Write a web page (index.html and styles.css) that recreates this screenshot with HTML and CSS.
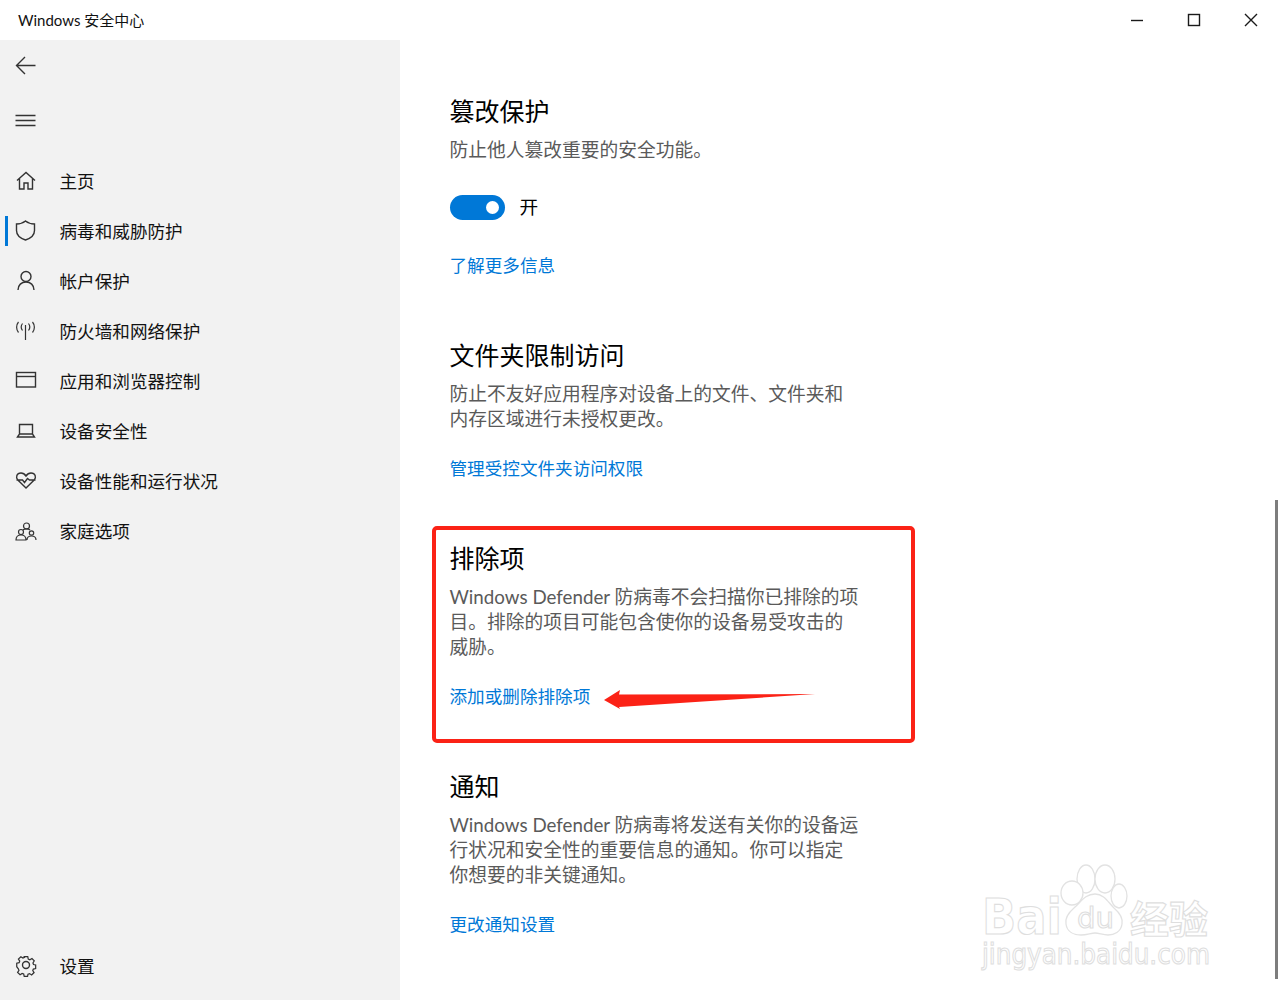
FILE: index.html
```html
<!DOCTYPE html>
<html lang="zh-CN">
<head>
<meta charset="utf-8">
<title>Windows 安全中心</title>
<link rel="stylesheet" href="styles.css">
</head>
<body>
<div class="window">
  <header class="titlebar">
    <span class="title">Windows 安全中心</span>
    <div class="controls">
      <button class="ctl"><svg width="14" height="14" viewBox="0 0 14 14"><path d="M1 7.500h12" class="ln"/></svg></button>
      <button class="ctl"><svg width="14" height="14" viewBox="0 0 14 14"><rect x="1.500" y="1.500" width="11" height="11" class="ln"/></svg></button>
      <button class="ctl"><svg width="14" height="14" viewBox="0 0 14 14"><path d="M1 1l12 12M13 1L1 13" class="ln"/></svg></button>
    </div>
  </header>
  <div class="body">
    <aside class="sidebar">
      <div class="tool back"><svg class="ico" viewBox="0 0 22 22"><path d="M20.500 10.500H1.500M10 2l-8.500 8.500L10 19"/></svg></div>
      <div class="tool menu"><svg class="ico" viewBox="0 0 22 22"><path d="M.5 5.500h20M.5 10.500h20M.5 15.500h20"/></svg></div>
      <nav class="nav">
        <a class="item"><svg class="ico" viewBox="0 0 22 22"><path d="M2 10.500 11 2.500l9 8M4.500 8.500V19h4.500v-6h4v6h4.500V8.500"/></svg><span>主页</span></a>
        <a class="item active"><svg class="ico" viewBox="0 0 22 22"><path d="M10.500 1c2.500 2 5.500 3 9 3v6.500c0 4.500-3 7.500-9 9.500-6-2-9-5-9-9.500V4c3.500 0 6.500-1 9-3z"/></svg><span>病毒和威胁防护</span></a>
        <a class="item"><svg class="ico" viewBox="0 0 22 22"><circle cx="11" cy="6.500" r="5"/><path d="M3 20c0-5 3.500-8 8-8s8 3 8 8"/></svg><span>帐户保护</span></a>
        <a class="item"><svg class="ico ico-thin" viewBox="0 0 22 22"><path d="M10.500 5v15M7.500 3.500c-1.500 2-1.500 5 0 7M13.500 3.500c1.500 2 1.500 5 0 7M3.500 2c-2.500 3-2.500 7.500 0 10.500M17.500 2c2.500 3 2.500 7.500 0 10.500"/></svg><span>防火墙和网络保护</span></a>
        <a class="item"><svg class="ico" viewBox="0 0 22 22"><rect x="1.500" y="2.500" width="19" height="14.500"/><path d="M1.500 6.500h19"/></svg><span>应用和浏览器控制</span></a>
        <a class="item"><svg class="ico" viewBox="0 0 22 22"><path d="M4.500 14V4.500h13V14M2.500 17l2-3h13l2 3z"/></svg><span>设备安全性</span></a>
        <a class="item"><svg class="ico" viewBox="0 0 22 22"><path d="M11 18 2.800 10C.5 7.500 1.500 3 6 3c2.500 0 4 1.500 5 3 1-1.500 2.500-3 5-3 4.500 0 5.500 4.500 3.200 7zM1.500 10h6l2 2.500 3-4 2 1.500h6"/></svg><span>设备性能和运行状况</span></a>
        <a class="item"><svg class="ico ico-thin" viewBox="0 0 22 22"><circle cx="11.500" cy="6" r="3"/><circle cx="6" cy="12" r="2.500"/><circle cx="16.500" cy="13" r="2.200"/><path d="M1 20c0-3 2-5 5-5s5 2 5 5zM12 20c0-2.500 2-4 4.500-4s4.500 1.500 4.500 4M8 10c1-1 2.300-1.200 3.500-1.200s2.500.2 3.500 1.200"/></svg><span>家庭选项</span></a>
      </nav>
      <a class="item settings"><svg class="ico" viewBox="0 0 22 22"><circle cx="11" cy="10" r="3.500"/><path d="M9 1.500h4l.6 2.800 1.800.8 2.400-1.500 2.600 2.800-1.500 2.300.7 1.800 2.400.5v4l-2.600.6-.7 1.700 1.500 2.300-2.800 2.700-2.300-1.500-1.800.7-.5 2.400H9l-.6-2.600-1.800-.7-2.300 1.500-2.800-2.700 1.500-2.300-.7-1.800L.5 13V9l2.700-.6.7-1.800-1.500-2.300L5.200 1.600l2.300 1.500 1.800-.8z" transform="translate(1.300 .3) scale(.88)"/></svg><span>设置</span></a>
    </aside>
    <main class="main">
      <section class="sec sec-tamper">
        <h2>篡改保护</h2>
        <p>防止他人篡改重要的安全功能。</p>
        <div class="toggle-row"><span class="toggle"><span class="knob"></span></span><span class="toggle-label">开</span></div>
        <a class="link">了解更多信息</a>
      </section>
      <section class="sec">
        <h2>文件夹限制访问</h2>
        <p>防止不友好应用程序对设备上的文件、文件夹和内存区域进行未授权更改。</p>
        <a class="link">管理受控文件夹访问权限</a>
      </section>
      <section class="sec sec-marked">
        <h2>排除项</h2>
        <p>Windows Defender 防病毒不会扫描你已排除的项目。排除的项目可能包含使你的设备易受攻击的威胁。</p>
        <a class="link">添加或删除排除项</a>
        <div class="redbox"></div>
        <svg class="arrow" width="214" height="22" viewBox="0 0 214 22"><polygon points="0,11 16,1 15,5.500 211,5 15,18 16,20"/></svg>
      </section>
      <section class="sec">
        <h2>通知</h2>
        <p>Windows Defender 防病毒将发送有关你的设备运行状况和安全性的重要信息的通知。你可以指定你想要的非关键通知。</p>
        <a class="link">更改通知设置</a>
      </section>
      <svg class="watermark" width="232" height="120" viewBox="0 0 232 120">
        <g class="wm-shape">
          <ellipse cx="106" cy="17" rx="9" ry="14"/>
          <ellipse cx="125" cy="17" rx="10" ry="14"/>
          <ellipse cx="92" cy="31" rx="11" ry="12"/>
          <ellipse cx="139" cy="34" rx="8" ry="12"/>
          <path d="M115 32c9 0 13 8 19 14 7 6 9 11 8 16-1 8-8 11-14 11-5 0-9-2-13-2s-8 2-14 2c-7 0-14-3-15-11-1-5 1-10 8-16 7-6 11-14 21-14z"/>
        </g>
        <text class="wm wm-big" x="2" y="72" textLength="80" lengthAdjust="spacingAndGlyphs">Bai</text>
        <text class="wm wm-du" x="97" y="66" textLength="37" lengthAdjust="spacingAndGlyphs">du</text>
        <text class="wm wm-cn" x="150" y="71" textLength="78" lengthAdjust="spacingAndGlyphs">经验</text>
        <text class="wm wm-url" x="2" y="102" textLength="228" lengthAdjust="spacingAndGlyphs">jingyan.baidu.com</text>
      </svg>
      <div class="scrollbar"></div>
    </main>
  </div>
</div>
</body>
</html>
```

FILE: styles.css
```css
* { box-sizing: border-box; }
html, body { margin: 0; padding: 0; height: 100%; overflow: hidden; }
body {
  font-family: Lato, "Noto Sans CJK SC", sans-serif;
  color: #000;
  background: #fff;
}
.window { display: flex; flex-direction: column; height: 1000px; width: 1280px; }
.titlebar { height: 40px; display: flex; align-items: center; justify-content: space-between; padding-left: 18px; padding-right: 1px; flex: none; }
.title { font-size: 15px; line-height: 20px; color: #111; }
.controls { display: flex; }
.ctl { width: 57px; height: 40px; border: 0; padding: 0; background: none; display: flex; align-items: center; justify-content: center; }
.ln { fill: none; stroke: #1a1a1a; stroke-width: 1.4; }

.body { flex: 1; display: flex; min-height: 0; }
.sidebar { width: 400px; flex: none; background: #f2f2f2; display: flex; flex-direction: column; padding-top: 1px; padding-left: 15px; padding-bottom: 9px; }
.ico { width: 22px; height: 22px; flex: none; fill: none; stroke: #333; stroke-width: 1.4; }
.ico-thin { stroke-width: 1.2; }
.tool { height: 50px; display: flex; align-items: center; }
.menu { margin-top: 5px; }
.nav { margin-top: 10px; flex: 1; display: flex; flex-direction: column; }
.item { position: relative; height: 50px; display: flex; align-items: center; gap: 22.5px; font-size: 17.6px; line-height: 24px; color: #111; }
.item span { padding-top: 2px; }
.active::before { content: ""; position: absolute; left: -10px; top: 10px; width: 3px; height: 30px; background: #0078d7; }

.main { position: relative; flex: 1; padding: 53px 0 0 49.5px; }
.sec { width: 410px; margin-bottom: 59px; position: relative; }
.sec h2 { margin: 0 0 8px; font-size: 25px; line-height: 36px; font-weight: 400; color: #000; }
.sec p { margin: 0 0 25px; font-size: 18.75px; line-height: 25px; color: #5a5a5a; }
.link { display: block; font-size: 17.6px; line-height: 25px; color: #0078d7; }
.sec-tamper p { margin-bottom: 0; }
.toggle-row { display: flex; align-items: center; gap: 15px; height: 24px; margin: 33px 0 34px; }
.toggle { width: 55px; height: 25px; border-radius: 13px; background: #0078d7; display: flex; align-items: center; justify-content: flex-end; padding-right: 6px; flex: none; }
.knob { width: 13px; height: 13px; border-radius: 50%; background: #fff; }
.toggle-label { font-size: 18.7px; line-height: 24px; color: #000; }

.redbox { position: absolute; left: -18px; top: -14px; width: 483px; height: 217px; border: 4px solid #fb2216; border-radius: 5px; }
.arrow { position: absolute; left: 154px; top: 149px; }
.arrow polygon { fill: #fb2216; }

.watermark { position: absolute; left: 580px; top: 822px; overflow: visible; }
.wm-shape { fill: #fff; stroke: #e2e2e2; stroke-width: 1.3; }
.wm { fill: #fff; stroke: #dedede; stroke-width: 1.1; font-family: "DejaVu Sans", "Noto Sans CJK SC", sans-serif; }
.wm-big { font-size: 50px; font-weight: 700; }
.wm-du { font-size: 28px; font-weight: 400; }
.wm-cn { font-size: 38px; font-weight: 700; font-family: "Noto Sans CJK SC", sans-serif; }
.wm-url { font-size: 28px; font-weight: 400; }

.scrollbar { position: absolute; left: 875px; top: 460px; width: 3px; height: 479px; background: #7d7d7d; }
```
